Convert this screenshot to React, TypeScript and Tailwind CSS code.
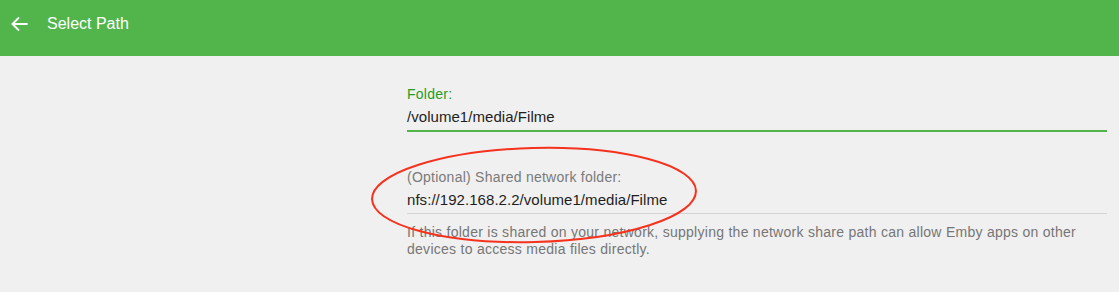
const FONT = { fontFamily: '"Liberation Sans", Arial, sans-serif' };

function BackArrow() {
  return (
    <svg width="17" height="14" viewBox="0 0 17 14" fill="none" stroke="currentColor" strokeWidth="1.8" strokeLinecap="round" strokeLinejoin="round">
      <path d="M16 7H1.5" />
      <path d="M7.5 1L1.5 7l6 6" />
    </svg>
  );
}

function Field({ label, value, focused }: { label: string; value: string; focused?: boolean }) {
  return (
    <div>
      <div className={`text-[14px] leading-[16px] tracking-[0.25px] ${focused ? 'text-[#1f9d1f]' : 'text-[#7a7a7a]'}`}>{label}</div>
      <div className="mt-[6px] text-[15px] leading-[18px] tracking-[0.05px] text-[#1e1e1e]">{value}</div>
      <div className={focused ? 'mt-[4px] h-[2px] bg-[#52b54b]' : 'mt-[4px] h-px bg-[#d4d4d4]'} />
    </div>
  );
}

export default function App() {
  return (
    <div className="relative min-h-[292px] w-full bg-[#f0f0f0]" style={FONT}>
      {/* header */}
      <div className="flex h-[56px] items-center bg-[#52b54b] pb-[8px] pl-[11px] text-white">
        <BackArrow />
        <span className="ml-[19px] text-[16px]">Select Path</span>
      </div>

      {/* form */}
      <div className="flex justify-end pr-[12px] pt-[30px]">
        <div className="w-[700px]">
          <Field label="Folder:" value="/volume1/media/Filme" focused />
          <div className="mt-[37px]">
            <Field label="(Optional) Shared network folder:" value="nfs://192.168.2.2/volume1/media/Filme" />
          </div>
          <p className="mt-[10px] text-[14px] leading-[17px] tracking-[0.27px] text-[#767676]">
            If this folder is shared on your network, supplying the network share path can allow Emby apps on other
            <br />
            devices to access media files directly.
          </p>
        </div>
      </div>

      {/* red annotation ellipse */}
      <svg className="pointer-events-none absolute left-0 top-0" width="1119" height="292">
        <ellipse cx="534" cy="195" rx="162" ry="47" fill="none" stroke="#f5321e" strokeWidth="2" transform="rotate(-1.5 534 195)" />
      </svg>
    </div>
  );
}
